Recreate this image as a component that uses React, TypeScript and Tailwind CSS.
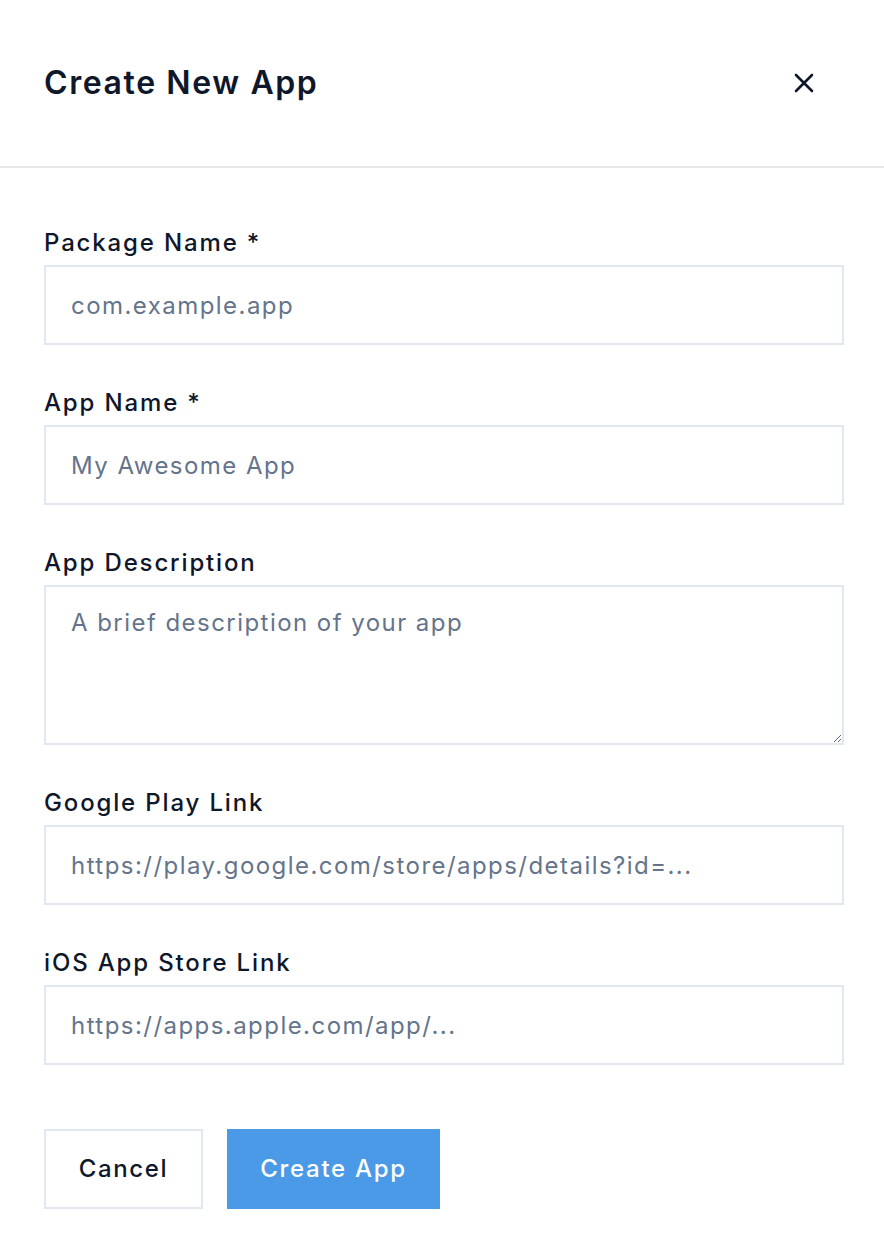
import React from "react";

const fields = [
  { label: "Package Name *", placeholder: "com.example.app" },
  { label: "App Name *", placeholder: "My Awesome App" },
  { label: "App Description", placeholder: "A brief description of your app", multiline: true },
  { label: "Google Play Link", placeholder: "https://play.google.com/store/apps/details?id=..." },
  { label: "iOS App Store Link", placeholder: "https://apps.apple.com/app/..." },
];

export default function App() {
  return (
    <div className="min-h-screen w-full bg-white font-['Inter',sans-serif] text-[#0f172a]">
      {/* header */}
      <div className="flex h-[168px] items-center border-b-2 border-[#e5e7eb] pl-[44px] pr-[60px]">
        <h2 className="text-[32px] font-semibold leading-[40px] tracking-[1.6px]">Create New App</h2>
        <button className="ml-auto flex h-[40px] w-[40px] items-center justify-center text-[#0f172a]">
          <svg width="20" height="20" viewBox="0 0 20 20" fill="none" stroke="currentColor" strokeWidth="2.6" strokeLinecap="round">
            <path d="M2 2L18 18M18 2L2 18" />
          </svg>
        </button>
      </div>

      {/* form */}
      <form className="flex flex-col gap-[40px] pl-[44px] pr-[40px] pt-[57px]">
        {fields.map((f) => (
          <div key={f.label} className="flex flex-col gap-[4px]">
            <label className="text-[24px] font-medium leading-[36px] tracking-[1.85px] text-[#0f172a]">{f.label}</label>
            {f.multiline ? (
              <textarea
                placeholder={f.placeholder}
                className="h-[160px] w-full resize-y border-2 border-[#e2e8f0] px-[25px] py-[18px] text-[24px] leading-[36px] tracking-[1.45px] outline-none placeholder:text-[#64748b]"
              />
            ) : (
              <input
                placeholder={f.placeholder}
                className="h-[80px] w-full border-2 border-[#e2e8f0] px-[25px] text-[24px] tracking-[1.45px] outline-none placeholder:text-[#64748b]"
              />
            )}
          </div>
        ))}

        <div className="mt-[24px] flex gap-[24px]">
          <button type="button" className="h-[80px] w-[159px] border-2 border-[#e2e8f0] bg-white text-[24px] font-medium tracking-[1.6px] text-[#0f172a]">
            Cancel
          </button>
          <button type="button" className="h-[80px] w-[213px] bg-[#4a9ae8] text-[24px] font-medium tracking-[1.7px] text-white">
            Create App
          </button>
        </div>
      </form>
    </div>
  );
}
